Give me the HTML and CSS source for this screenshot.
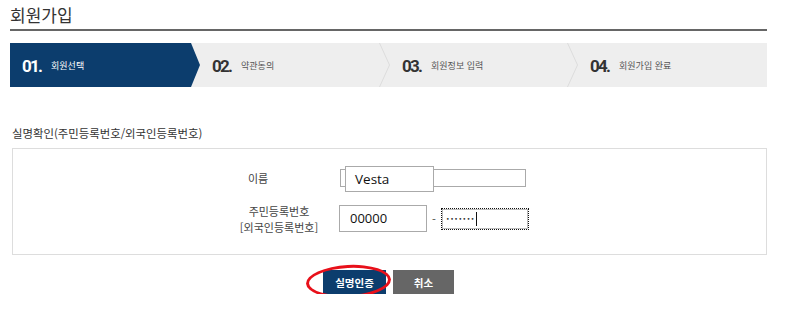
FILE: index.html
```html
<!DOCTYPE html>
<html lang="ko">
<head>
<meta charset="utf-8">
<title>회원가입</title>
<link rel="stylesheet" href="styles.css">
</head>
<body>
<div class="page">
  <h1 class="title">회원가입</h1>
  <ol class="steps">
    <li class="step active"><span class="num">01.</span><span class="lbl">회원선택</span></li>
    <li class="step sep"><span class="num">02.</span><span class="lbl">약관동의</span></li>
    <li class="step sep s3"><span class="num">03.</span><span class="lbl">회원정보 입력</span></li>
    <li class="step s4"><span class="num">04.</span><span class="lbl">회원가입 완료</span></li>
  </ol>
  <h2 class="sub">실명확인(주민등록번호/외국인등록번호)</h2>
  <div class="box">
    <div class="row row-name">
      <div class="label label-name">이름</div>
      <div class="field">
        <div class="input input-name"></div>
        <div class="ime">Vesta</div>
      </div>
    </div>
    <div class="row row-rrn">
      <div class="label">주민등록번호<br>[외국인등록번호]</div>
      <div class="input input-rrn1">00000</div>
      <span class="dash">-</span>
      <div class="input input-rrn2"><span class="dots">•••••••</span><span class="caret"></span></div>
    </div>
  </div>
  <div class="btns">
    <div class="btn-wrap">
      <button class="btn btn-primary">실명인증</button>
      <span class="ring"></span>
    </div>
    <button class="btn btn-cancel">취소</button>
  </div>
</div>
</body>
</html>
```
FILE: styles.css
```css
* { box-sizing: border-box; }
body {
  margin: 0;
  background: #fff;
  font-family: "Noto Sans CJK KR", "Noto Sans", sans-serif;
  color: #333;
}
.page {
  width: 757px;
  margin-left: 10px;
}
.title {
  margin: 0;
  height: 31px;
  padding-top: 3px;
  font-size: 17px;
  line-height: 24px;
  font-weight: 400;
  color: #333;
  border-bottom: 2px solid #666;
}
.steps {
  list-style: none;
  margin: 12px 0 0;
  padding: 0;
  display: flex;
  height: 44px;
  background: #eeeeee;
}
.step {
  position: relative;
  display: flex;
  align-items: center;
  padding-left: 12px;
  width: 190px;
  flex: none;
}
.step.s3 { width: 188px; }
.step.s4 { flex: 1; width: auto; }
.step.active {
  background: #0c3d6d;
  clip-path: polygon(0 0, calc(100% - 9px) 0, 100% 50%, calc(100% - 9px) 100%, 0 100%);
}
.step.sep::after {
  content: "";
  position: absolute;
  right: 0;
  top: 0;
  width: 11px;
  height: 44px;
  background: #dcdcdc;
  clip-path: polygon(0 0, 1px 0, 11px 50%, 1px 100%, 0 100%, 10px 50%);
}
.num {
  font-family: "Roboto", "Noto Sans", sans-serif;
  font-size: 17px;
  font-weight: 700;
  letter-spacing: -1.8px;
  color: #333;
  margin-top: 2px;
}
.lbl {
  margin-left: 10px;
  font-size: 9px;
  color: #555;
}
.active .num, .active .lbl { color: #fff; }

.sub {
  margin: 37px 0 6px 2px;
  font-size: 11.4px;
  line-height: 18px;
  font-weight: 400;
  color: #333;
}
.box {
  margin-left: 2px;
  height: 107px;
  border: 1px solid #dddddd;
  padding: 17px 0 0 206px;
}
.row {
  display: flex;
  align-items: center;
}
.row-name { height: 24px; }
.row-rrn { margin-top: 15px; height: 27px; }
.label {
  width: 120px;
  text-align: center;
  font-size: 11px;
  line-height: 16px;
  color: #444;
}
.label-name { padding-right: 42px; }
.field {
  position: relative;
  margin-left: 1px;
}
.input {
  border: 1px solid #aaaaaa;
  background: #fff;
  font-family: "Open Sans", "Noto Sans", sans-serif;
  font-size: 13px;
  color: #111;
}
.input-name {
  width: 186px;
  height: 18px;
}
.ime {
  position: absolute;
  left: 5px;
  top: -3px;
  width: 89px;
  height: 26px;
  border: 1px solid #aaaaaa;
  background: #fff;
  padding-left: 9px;
  font-family: "Open Sans", "Noto Sans", sans-serif;
  font-size: 13.5px;
  line-height: 24px;
  color: #111;
}
.input-rrn1 {
  width: 88px;
  height: 27px;
  padding-left: 10px;
  line-height: 25px;
}
.dash {
  width: 14px;
  text-align: center;
  font-size: 11px;
  color: #444;
}
.input-rrn2 {
  width: 88px;
  height: 22px;
  border: 1px dotted #111;
  box-shadow: inset 0 0 0 1px #bbb;
  display: flex;
  align-items: center;
  padding-left: 4px;
}
.dots {
  font-family: "DejaVu Sans", sans-serif;
  font-size: 6px;
  letter-spacing: 0.6px;
  line-height: 10px;
  color: #222;
}
.caret {
  width: 1px;
  height: 14px;
  background: #111;
  margin-left: 1px;
}
.btns {
  display: flex;
  justify-content: center;
  gap: 7px;
  margin-top: 15px;
}
.btn-wrap { position: relative; }
.btn {
  display: block;
  height: 24px;
  border: 0;
  padding: 0;
  font-family: "Noto Sans CJK KR", sans-serif;
  font-size: 10.5px;
  font-weight: 700;
  color: #fff;
}
.btn-primary { width: 63px; background: #0c3d6d; }
.btn-cancel { width: 61px; background: #666666; }
.ring {
  position: absolute;
  left: -17px;
  top: -5px;
  width: 85px;
  height: 33px;
  border: 3px solid #e8101a;
  border-radius: 50%;
  transform: rotate(-3deg);
}
```
